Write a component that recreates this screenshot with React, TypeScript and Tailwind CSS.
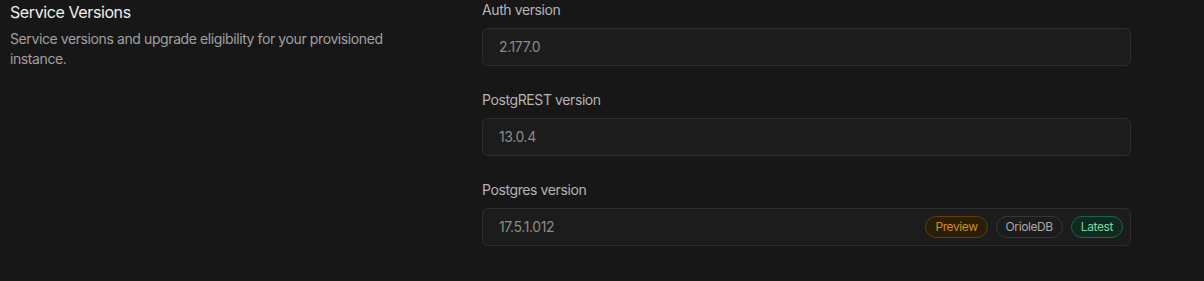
import React from "react";

type Badge = { label: string; tone: "warning" | "default" | "brand" };

type VersionField = {
  label: string;
  value: string;
  badges?: Badge[];
};

const fields: VersionField[] = [
  { label: "Auth version", value: "2.177.0" },
  { label: "PostgREST version", value: "13.0.4" },
  {
    label: "Postgres version",
    value: "17.5.1.012",
    badges: [
      { label: "Preview", tone: "warning" },
      { label: "OrioleDB", tone: "default" },
      { label: "Latest", tone: "brand" },
    ],
  },
];

const badgeTone: Record<Badge["tone"], string> = {
  warning: "border-[#5c3f0c] bg-[#2a1e08] text-[#d18f16]",
  default: "border-[#363636] bg-transparent text-[#a9a9a9]",
  brand: "border-[#1b6646] bg-[#11291f] text-[#72d8a7]",
};

function VersionBadge({ badge }: { badge: Badge }) {
  return (
    <span
      className={`inline-flex h-[22px] items-center rounded-full border px-[9px] text-xs leading-none ${badgeTone[badge.tone]}`}
    >
      {badge.label}
    </span>
  );
}

export default function App() {
  return (
    <div
      className="flex h-[281px] w-full bg-[#171717] pl-[10px] tracking-[-0.025em]"
      style={{ fontFamily: "Inter, 'Noto Sans', sans-serif" }}
    >
      <div className="w-[472px] shrink-0 pr-[60px]">
        <h3 className="text-base leading-6 text-[#f0f0f0]">Service Versions</h3>
        <p className="mt-[5px] pr-[10px] text-sm leading-5 text-[#a0a0a0]">
          Service versions and upgrade eligibility for your provisioned instance.
        </p>
      </div>
      <div className="flex w-[649px] flex-col gap-[24px]">
        {fields.map((field) => (
          <div key={field.label} className="flex flex-col">
            <label className="text-sm leading-5 text-[#b4b4b4]">{field.label}</label>
            <div className="mt-[8px] flex h-[38px] items-center justify-between rounded-md border border-[#2e2e2e] bg-[#1c1c1c] pl-4 pr-[7px]">
              <span className="text-sm text-[#8a8a8a]">{field.value}</span>
              {field.badges ? (
                <div className="flex gap-2">
                  {field.badges.map((badge) => (
                    <VersionBadge key={badge.label} badge={badge} />
                  ))}
                </div>
              ) : null}
            </div>
          </div>
        ))}
      </div>
    </div>
  );
}
